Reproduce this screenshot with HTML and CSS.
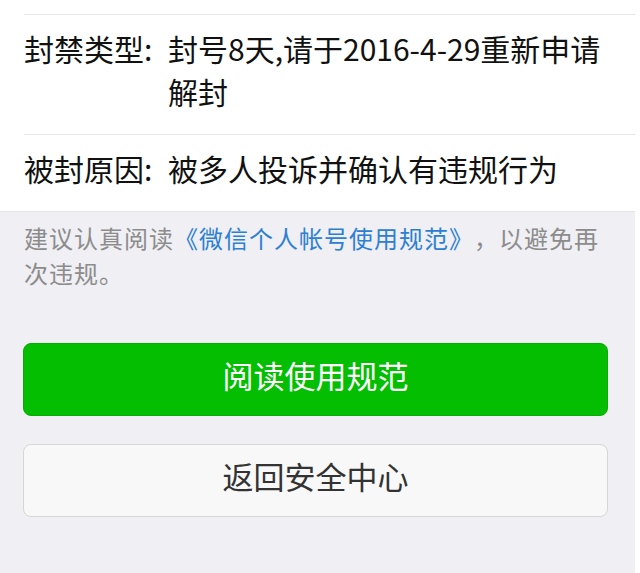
FILE: index.html
```html
<!DOCTYPE html>
<html lang="zh">
<head>
  <meta charset="UTF-8">
  <meta name="viewport" content="width=device-width, initial-scale=1.0">
  <title>帐号封禁</title>
  <link rel="stylesheet" href="styles.css">
</head>
<body>

  <div class="page">
    <!-- 封禁信息 -->
    <div class="info-list">
      <div class="info-row info-top"></div>
      <div class="info-row">
        <span class="info-label">封禁类型:</span>
        <span class="info-value">封号8天,请于2016-4-29重新申请解封</span>
      </div>
      <div class="info-row">
        <span class="info-label">被封原因:</span>
        <span class="info-value">被多人投诉并确认有违规行为</span>
      </div>
    </div>

    <p class="tip">建议认真阅读<a class="tip-link" href="#">《微信个人帐号使用规范》</a>，以避免再次违规。</p>

    <div class="actions">
      <a class="btn btn-primary" href="#">阅读使用规范</a>
      <a class="btn btn-default" href="#">返回安全中心</a>
    </div>
  </div>

</body>
</html>
```

FILE: styles.css
```css
body {
  margin: 0;
  padding: 0;
  background: #fff;
  font-family: "Noto Sans CJK SC", "Noto Sans", sans-serif;
  overflow: hidden;
}

.page {
  width: 635px;
  min-height: 100vh;
  background: #efeff4;
}

/* 白色信息列表 */
.info-list {
  background: #fff;
  border-bottom: 1px solid #e3e3e8;
}

.info-row {
  display: flex;
  margin-left: 24px;
  padding: 12px 24px 21px 0;
  font-size: 30px;
  line-height: 43px;
  color: #111;
  border-bottom: 1px solid #e5e5e5;
}

.info-row:last-child {
  border-bottom: none;
}

.info-top {
  padding: 0;
  height: 14px;
}

.info-label {
  flex: 0 0 144px;
}

.info-value {
  flex: 1;
}

/* 灰色提示文字 */
.tip {
  margin: 0;
  padding: 8px 18px 0 24px;
  font-size: 24px;
  letter-spacing: 1px;
  line-height: 35px;
  color: #8c8c8c;
  text-spacing-trim: space-all;
}

.tip-link {
  color: #2c80d3;
  text-decoration: none;
}

/* 按钮 */
.actions {
  display: flex;
  flex-direction: column;
  gap: 28px;
  padding: 53px 27px 0 23px;
}

.btn {
  display: block;
  height: 73px;
  box-sizing: border-box;
  border-radius: 8px;
  text-align: center;
  line-height: 61px;
  font-size: 31px;
  text-decoration: none;
}

.btn-primary {
  background: #04be02;
  border: 1px solid #06ad04;
  color: #fff;
}

.btn-default {
  background: #f8f8f8;
  border: 1px solid #d6d6d6;
  color: #333;
}
```
